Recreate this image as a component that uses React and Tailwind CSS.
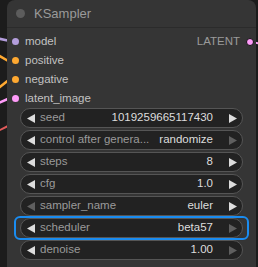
const INPUTS = [
  { name: 'model', color: 'bg-[#b39ddb]' },
  { name: 'positive', color: 'bg-[#ffa931]' },
  { name: 'negative', color: 'bg-[#ffa931]' },
  { name: 'latent_image', color: 'bg-[#ff9cf9]' }
]

const WIDGETS = [
  { label: 'seed', value: '1019259665117430', left: true, right: true },
  { label: 'control after genera...', value: 'randomize', left: true, right: false },
  { label: 'steps', value: '8', left: true, right: true },
  { label: 'cfg', value: '1.0', left: true, right: true },
  { label: 'sampler_name', value: 'euler', left: false, right: true },
  { label: 'scheduler', value: 'beta57', left: true, right: false, active: true },
  { label: 'denoise', value: '1.00', left: true, right: false }
]

function Arrow({ dir, on }) {
  return (
    <svg width="8" height="9" viewBox="0 0 8 9" className="shrink-0">
      <path
        d={dir === 'left' ? 'M8 0 L0 4.5 L8 9 Z' : 'M0 0 L8 4.5 L0 9 Z'}
        fill={on ? '#dddddd' : '#5f5f5f'}
      />
    </svg>
  )
}

function Widget({ label, value, left, right, active }) {
  const pill = (
    <div className="h-[20px] rounded-full bg-[#222222] border border-[#555555] flex items-center pl-[6px] pr-[5px] text-[11.5px]">
      <Arrow dir="left" on={left} />
      <span className="ml-[5px] text-[#9a9a9a] whitespace-nowrap">{label}</span>
      <span className="ml-auto pl-[3px] text-[#dddddd] whitespace-nowrap">{value}</span>
      <span className="ml-[16px] flex"><Arrow dir="right" on={right} /></span>
    </div>
  )
  if (active) {
    return (
      <div className="-mx-[6px] -my-[2px] px-[4px] rounded-[6px] border-2 border-[#1a8cf0]">
        {pill}
      </div>
    )
  }
  return pill
}

export default function App() {
  return (
    <div
      className="relative w-[258px] h-[267px] overflow-hidden bg-[#1c1c1c]"
      style={{ fontFamily: '"Liberation Sans", Arial, sans-serif' }}
    >
      <svg className="absolute left-0 top-0" width="258" height="267">
        <path d="M-4 38 L10 41" stroke="#b39ddb" strokeWidth="2.5" fill="none" />
        <path d="M-4 54 L10 62" stroke="#ffa931" strokeWidth="2.5" fill="none" />
        <path d="M-4 90 L10 79" stroke="#ffa931" strokeWidth="2.5" fill="none" />
        <path d="M-4 104 L10 98" stroke="#ff9cf9" strokeWidth="2.5" fill="none" />
        <path d="M-4 132 L8 126" stroke="#e05a5a" strokeWidth="2" fill="none" />
        <path d="M252 42 L262 44" stroke="#ff9cf9" strokeWidth="2" fill="none" />
      </svg>

      <div className="relative ml-[7px] w-[249px] h-[280px] rounded-t-[8px] bg-[#353535]">
        <div className="h-[28px] flex items-center border-b border-[#2b2b2b]">
          <span className="ml-[9px] w-[9px] h-[9px] rounded-full bg-[#5c5c5c]" />
          <span className="ml-[9px] text-[13px] text-[#9a9a9a]">KSampler</span>
        </div>

        <div className="pt-[4px]">
          {INPUTS.map((input, i) => (
            <div key={input.name} className="h-[19px] flex items-center text-[11.5px]">
              <span className={`ml-[5px] w-[7px] h-[7px] rounded-full ${input.color}`} />
              <span className="ml-[6px] text-[#c2c2c2]">{input.name}</span>
              {i === 0 && (
                <>
                  <span className="ml-auto text-[#9a9a9a]">LATENT</span>
                  <span className="ml-[6px] mr-[2px] w-[8px] h-[8px] rounded-full bg-[#ff9cf9] border border-[#111]" />
                </>
              )}
            </div>
          ))}
        </div>

        <div className="mx-[13px] flex flex-col gap-[2px]">
          {WIDGETS.map((w) => (
            <Widget key={w.label} {...w} />
          ))}
        </div>
      </div>
    </div>
  )
}
